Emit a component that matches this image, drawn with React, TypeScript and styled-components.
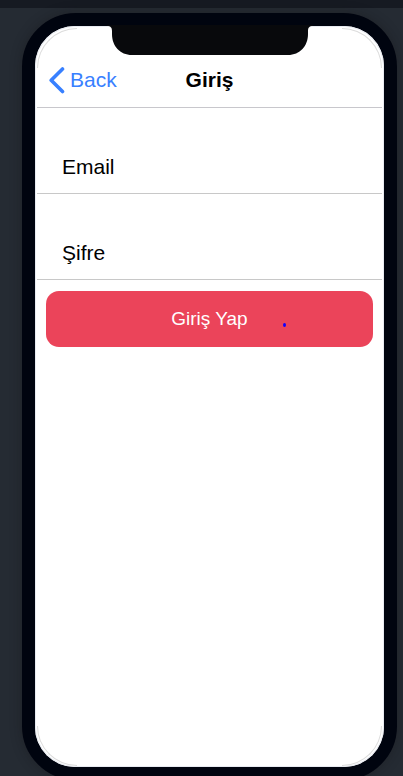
import React from 'react';
import styled, { createGlobalStyle, css } from 'styled-components';

const GlobalStyle = createGlobalStyle`
  * { box-sizing: border-box; }
  body {
    margin: 0;
    background: #252b33;
    font-family: "Liberation Sans", Arial, sans-serif;
    font-size: 21px;
    line-height: 24px;
    color: #000;
  }
`;

const Page = styled.div`
  display: flex;
  flex-direction: column;
  height: 100vh;
  overflow: hidden;
`;

const WindowEdge = styled.div`
  flex: none;
  height: 8px;
  background: #161a22;
`;

const Stage = styled.div`
  flex: 1;
  display: flex;
  min-height: 0;
  padding: 5px 6px 0 22px;
`;

const Phone = styled.div`
  flex: 1;
  display: flex;
  margin-bottom: -4px;
  border: 13px solid #00040f;
  border-radius: 54px;
  background: #00040f;
  box-shadow: 0 0 12px rgba(20, 20, 22, 0.4);
`;

const Screen = styled.main`
  position: relative;
  flex: 1;
  display: flex;
  flex-direction: column;
  min-width: 0;
  padding: 0 2px;
  border-radius: 40px;
  background: #fff;
  box-shadow: inset 0 0 0 1px #e8ebf1;
`;

type Side = 'top' | 'bottom';
type Edge = 'left' | 'right';

const Corner = styled.span<{ $side: Side; $edge: Edge }>`
  position: absolute;
  width: 40px;
  height: 40px;
  pointer-events: none;
  ${({ $side, $edge }) => css`
    ${$side}: ${$side === 'top' ? 2 : 1}px;
    ${$edge}: 2px;
    border-${$side}: 1px solid #dcdcdc;
    border-${$edge}: 1px solid #dcdcdc;
    border-${$side}-${$edge}-radius: 40px;
  `}
`;

const Notch = styled.svg`
  position: absolute;
  top: -1px;
  left: 50%;
  width: 206px;
  height: 30px;
  margin-left: -103px;
`;

const Header = styled.header`
  display: grid;
  grid-template-columns: 1fr auto 1fr;
  align-items: center;
  height: 82px;
  padding: 26px 12px 0;
  border-bottom: 1px solid #c8c7cc;
`;

const BackButton = styled.button`
  display: flex;
  align-items: center;
  gap: 5px;
  justify-self: start;
  padding: 0;
  border: 0;
  background: none;
  color: #3880ff;
  font: inherit;
  cursor: pointer;
`;

const Title = styled.h1`
  margin: 0;
  font-size: 21px;
  font-weight: 700;
`;

const Form = styled.form`
  display: flex;
  flex-direction: column;
`;

const Field = styled.input`
  width: 100%;
  height: 86px;
  padding: 32px 25px 0;
  border: 0;
  border-bottom: 1px solid #c8c8c8;
  border-radius: 0;
  outline: 0;
  background: transparent;
  color: #000;
  font: inherit;
  &::placeholder { color: #000; opacity: 1; }
`;

const Submit = styled.button`
  position: relative;
  height: 56px;
  margin: 11px 9px;
  padding: 0;
  border: 0;
  border-radius: 13px;
  background: #eb445a;
  color: #fff;
  font: inherit;
  font-size: 19px;
  cursor: pointer;
`;

const Mark = styled.span`
  position: absolute;
  right: 87px;
  bottom: 20px;
  width: 3px;
  height: 4px;
  border-radius: 50%;
  background: #1000ff;
`;

export default function App() {
  return (
    <>
      <GlobalStyle />
      <Page>
        <WindowEdge />
        <Stage>
          <Phone>
            <Screen>
              <Corner $side="top" $edge="left" />
              <Corner $side="top" $edge="right" />
              <Corner $side="bottom" $edge="left" />
              <Corner $side="bottom" $edge="right" />
              <Notch viewBox="0 0 206 30" aria-hidden="true">
                <path
                  d="M0 0H206V1C202 1 201 3 201 6V9C201 21 193 30 181 30H25C13 30 5 21 5 9V6C5 3 4 1 0 1Z"
                  fill="#08090c"
                />
              </Notch>
              <Header>
                <BackButton type="button">
                  <svg width="16" height="28" viewBox="0 0 16 28" aria-hidden="true">
                    <path
                      d="M13.5 3L2.2 14.2L13.5 25.5"
                      fill="none"
                      stroke="currentColor"
                      strokeWidth="3.6"
                      strokeLinecap="round"
                      strokeLinejoin="round"
                    />
                  </svg>
                  Back
                </BackButton>
                <Title>Giriş</Title>
              </Header>
              <Form onSubmit={(event: React.FormEvent) => event.preventDefault()}>
                <Field type="email" placeholder="Email" aria-label="Email" />
                <Field type="password" placeholder="Şifre" aria-label="Şifre" />
                <Submit type="submit">
                  Giriş Yap
                  <Mark />
                </Submit>
              </Form>
            </Screen>
          </Phone>
        </Stage>
      </Page>
    </>
  );
}
